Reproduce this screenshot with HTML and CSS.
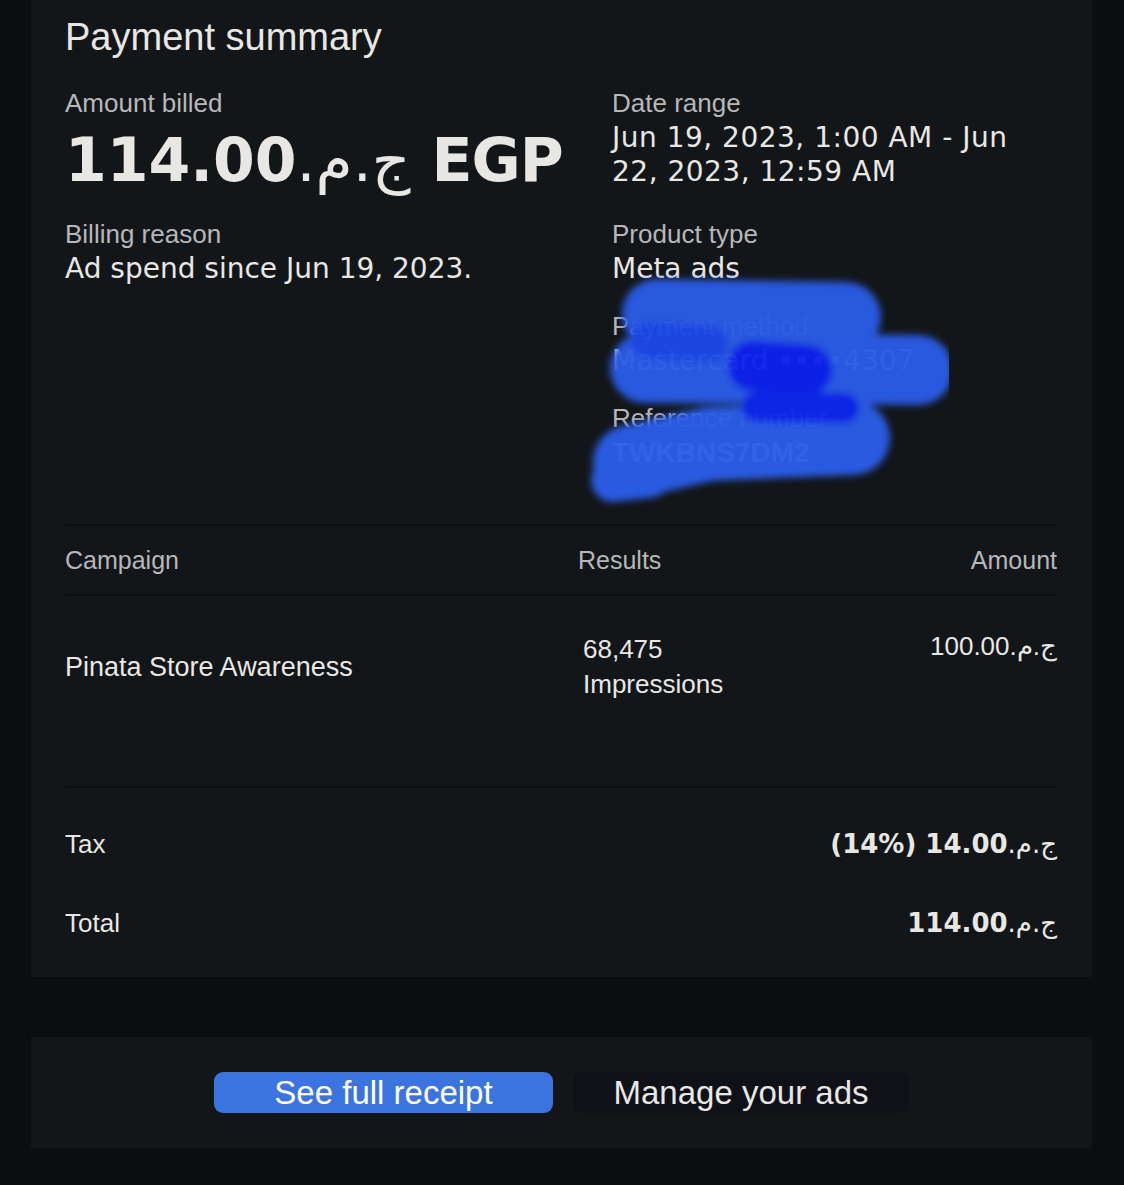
FILE: index.html
```html
<!DOCTYPE html>
<html lang="en">
<head>
    <meta charset="utf-8">
    <title>Payment summary</title>
    <link rel="stylesheet" href="styles.css">
</head>
<body>
    <div class="page">
        <section class="card summary-card">
            <h1 class="title">Payment summary</h1>

            <div class="details">
                <div class="field">
                    <div class="label">Amount billed</div>
                    <div class="amount-big">114.00<bdi class="cur">ج.م.</bdi> EGP</div>
                </div>
                <div class="field">
                    <div class="label">Date range</div>
                    <div class="value date">Jun 19, 2023, 1:00 AM - Jun<br>22, 2023, 12:59 AM</div>
                </div>

                <div class="field">
                    <div class="label">Billing reason</div>
                    <div class="value">Ad spend since Jun 19, 2023.</div>
                </div>
                <div class="field">
                    <div class="label">Product type</div>
                    <div class="value">Meta ads</div>
                </div>

                <div class="field right">
                    <div class="label">Payment method</div>
                    <div class="value">Mastercard ••••4307</div>
                </div>
                <div class="field right">
                    <div class="label">Reference number</div>
                    <div class="value ref">TWKBNS7DM2</div>
                </div>
            </div>

            <!-- scribble over the private rows -->
            <svg class="scribble" width="440" height="250" viewBox="0 0 440 250">
                <defs>
                    <filter id="soft" x="-20%" y="-40%" width="140%" height="180%">
                        <feGaussianBlur stdDeviation="3.5"/>
                    </filter>
                </defs>
                <g filter="url(#soft)" stroke-linecap="round" fill="none">
                    <path d="M148 52 L337 55" stroke="#2a5be6" stroke-width="70"/>
                    <path d="M136 106 L409 108" stroke="#2a5be7" stroke-width="70"/>
                    <path d="M121 200 L200 182 L344 176" stroke="#2b5de8" stroke-width="74"/>
                    <path d="M104 218 L140 214" stroke="#2b5de8" stroke-width="44"/>
                    <path d="M244 104 L298 108" stroke="#0a23ef" stroke-width="50"/>
                    <path d="M248 145 L335 146" stroke="#0d27ee" stroke-width="30"/>
                    <path d="M140 78 L200 82" stroke="#1f48e9" stroke-width="36"/>
                </g>
            </svg>

            <div class="table">
                <div class="trow thead">
                    <div>Campaign</div>
                    <div>Results</div>
                    <div class="num">Amount</div>
                </div>
                <div class="trow tbody">
                    <div class="campaign">Pinata Store Awareness</div>
                    <div class="results">68,475<br>Impressions</div>
                    <div class="num amount">100.00<bdi>ج.م.</bdi></div>
                </div>
            </div>

            <div class="totals">
                <div class="total-row">
                    <div>Tax</div>
                    <div class="strong">(14%) 14.00<bdi class="cur">ج.م.</bdi></div>
                </div>
                <div class="total-row">
                    <div>Total</div>
                    <div class="strong">114.00<bdi class="cur">ج.م.</bdi></div>
                </div>
            </div>
        </section>

        <section class="card actions">
            <button class="btn primary">See full receipt</button>
            <button class="btn secondary">Manage your ads</button>
        </section>
    </div>
</body>
</html>
```

FILE: styles.css
```css
html,
body {
    margin: 0;
    background-color: #0b0e11;
    color: #e9e7e4;
    font-family: "Liberation Sans", Arial, sans-serif;
}

.page {
    padding: 0 32px 38px 31px;
}

.card {
    background-color: #131619;
}

.summary-card {
    position: relative;
    padding: 14px 35px 0 34px;
}

.title {
    margin: 0;
    font-size: 38px;
    font-weight: normal;
    line-height: 46px;
}

/* two columns of label / value pairs */
.details {
    display: grid;
    grid-template-columns: 547px 1fr;
    row-gap: 24px;
    margin-top: 27px;
    padding-bottom: 54px;
}
.field.right {
    grid-column: 2;
}

.label {
    font-size: 26px;
    line-height: 32px;
    color: #b6b7b9;
}
.value {
    margin-top: 2px;
    font-family: "DejaVu Sans", sans-serif;
    font-size: 28px;
    line-height: 34px;
}
.value.date {
    letter-spacing: 0.5px;
}
.value.ref {
    font-family: "Liberation Sans", Arial, sans-serif;
    font-weight: bold;
}
.amount-big {
    margin-top: 7px;
    font-family: "DejaVu Sans", sans-serif;
    font-weight: bold;
    font-size: 60px;
    line-height: 68px;
    letter-spacing: -1px;
}

/* currency sign comes in a lighter weight */
.cur {
    font-weight: normal;
}

.scribble {
    position: absolute;
    left: 478px;
    top: 262px;
    opacity: 0.96;
}

.table {
    border-top: 2px solid #0c0f12;
}
.trow {
    display: grid;
    grid-template-columns: 513px 1fr auto;
}
.thead {
    height: 68px;
    align-items: center;
    font-size: 25px;
    color: #b6b7b9;
    border-bottom: 2px solid #0c0f12;
}
.tbody {
    padding: 36px 0 84px;
    font-size: 26px;
    line-height: 35px;
}
.tbody .campaign {
    align-self: center;
    font-size: 27px;
}
.tbody .results {
    padding-left: 5px;
}
.num {
    text-align: right;
}
.tbody .amount {
    margin-top: -3px;
}

.totals {
    display: flex;
    flex-direction: column;
    gap: 45px;
    padding: 39px 0 37px;
    border-top: 2px solid #0c0f12;
}
.total-row {
    display: flex;
    justify-content: space-between;
    align-items: center;
    font-size: 26px;
    line-height: 34px;
}
.strong {
    font-family: "DejaVu Sans", sans-serif;
    font-weight: bold;
    font-size: 26px;
}

.actions {
    margin-top: 60px;
    height: 111px;
    display: flex;
    justify-content: center;
    align-items: center;
    gap: 20px;
}
.btn {
    height: 41px;
    border: none;
    border-radius: 9px;
    padding: 0;
    font-family: "Liberation Sans", Arial, sans-serif;
    font-size: 33px;
    cursor: pointer;
}
.btn.primary {
    width: 339px;
    background-color: #3b74df;
    color: #ffffff;
}
.btn.secondary {
    width: 336px;
    background-color: #0e1218;
    color: #e9e7e4;
}
```
